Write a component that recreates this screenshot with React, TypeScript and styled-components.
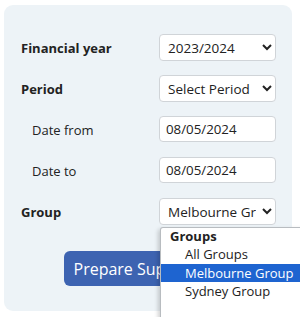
import React from "react";
import styled, { createGlobalStyle } from "styled-components";

const GlobalStyle = createGlobalStyle`
  html, body {
    margin: 0;
    padding: 0;
    background: #ffffff;
    font-family: "Open Sans", "Noto Sans", sans-serif;
    overflow: hidden;
  }
`;

const Page = styled.div`
  width: 300px;
  height: 317px;
  padding: 5px 8px 6px 4px;
  box-sizing: border-box;
  overflow: hidden;
`;

const Panel = styled.section`
  height: 306px;
  box-sizing: border-box;
  background: #edf3f7;
  border-radius: 9px;
  padding: 29px 16px 0 17px;
  display: flex;
  flex-direction: column;
  gap: 14px;
`;

const Row = styled.div`
  display: grid;
  grid-template-columns: 138px 117px;
  align-items: center;
  height: 27px;
`;

const Label = styled.label<{ $sub?: boolean }>`
  font-size: 13px;
  color: #222;
  font-weight: ${(p) => (p.$sub ? 400 : 700)};
  padding-left: ${(p) => (p.$sub ? "11px" : "0")};
`;

const Field = styled.div`
  position: relative;
  height: 100%;
`;

const Select = styled.select`
  width: 117px;
  height: 27px;
  box-sizing: border-box;
  background: #ffffff;
  border: 1px solid #d0d4d8;
  border-radius: 4px;
  padding: 0 3px 0 4px;
  font-family: "Open Sans", sans-serif;
  font-size: 13.5px;
  color: #222;
`;

const TextInput = styled.input`
  width: 117px;
  height: 26px;
  box-sizing: border-box;
  background: #ffffff;
  border: 1px solid #d0d4d8;
  border-radius: 4px;
  padding: 0 6px;
  font-family: "Open Sans", sans-serif;
  font-size: 13.3px;
  color: #222;
`;

const ButtonRow = styled.div`
  display: flex;
  justify-content: center;
  padding-top: 12px;
`;

const PrimaryButton = styled.button`
  width: 170px;
  height: 35px;
  background: #3d63b1;
  color: #ffffff;
  border: none;
  border-radius: 6px;
  font-family: "Open Sans", sans-serif;
  font-size: 16px;
  padding: 0 10px;
  text-align: left;
  white-space: nowrap;
  overflow: hidden;
`;

const Dropdown = styled.ul`
  position: absolute;
  top: 29px;
  left: 1px;
  width: 150px;
  margin: 0;
  padding: 0 0 18px;
  list-style: none;
  background: #ffffff;
  border: 1px solid #b8bcc0;
  border-bottom: none;
  border-radius: 3px 0 0 0;
  box-shadow: -2px 2px 4px rgba(0, 0, 0, 0.18);
  font-family: "Open Sans", sans-serif;
  font-size: 13px;
  color: #222;
  z-index: 5;
`;

const GroupHeading = styled.li`
  height: 17px;
  line-height: 17px;
  padding-left: 9px;
  font-weight: 700;
`;

const Option = styled.li<{ $active?: boolean }>`
  height: 18.5px;
  line-height: 18.5px;
  padding-left: 24px;
  background: ${(p) => (p.$active ? "#1e64d0" : "transparent")};
  color: ${(p) => (p.$active ? "#ffffff" : "#222")};
  white-space: nowrap;
`;

const groups = ["All Groups", "Melbourne Group", "Sydney Group"];

const App: React.FC = () => {
  return (
    <Page>
      <GlobalStyle />
      <Panel>
        <Row>
          <Label>Financial year</Label>
          <Field>
            <Select defaultValue="2023/2024">
              <option>2023/2024</option>
            </Select>
          </Field>
        </Row>
        <Row>
          <Label>Period</Label>
          <Field>
            <Select defaultValue="">
              <option value="">Select Period</option>
            </Select>
          </Field>
        </Row>
        <Row>
          <Label $sub>Date from</Label>
          <Field>
            <TextInput type="text" defaultValue="08/05/2024" />
          </Field>
        </Row>
        <Row>
          <Label $sub>Date to</Label>
          <Field>
            <TextInput type="text" defaultValue="08/05/2024" />
          </Field>
        </Row>
        <Row>
          <Label>Group</Label>
          <Field>
            <Select defaultValue="Melbourne Group">
              {groups.map((g) => (
                <option key={g}>{g}</option>
              ))}
            </Select>
            <Dropdown>
              <GroupHeading>Groups</GroupHeading>
              {groups.map((g) => (
                <Option key={g} $active={g === "Melbourne Group"}>
                  {g}
                </Option>
              ))}
            </Dropdown>
          </Field>
        </Row>
        <ButtonRow>
          <PrimaryButton>Prepare Super Report</PrimaryButton>
        </ButtonRow>
      </Panel>
    </Page>
  );
};

export default App;
